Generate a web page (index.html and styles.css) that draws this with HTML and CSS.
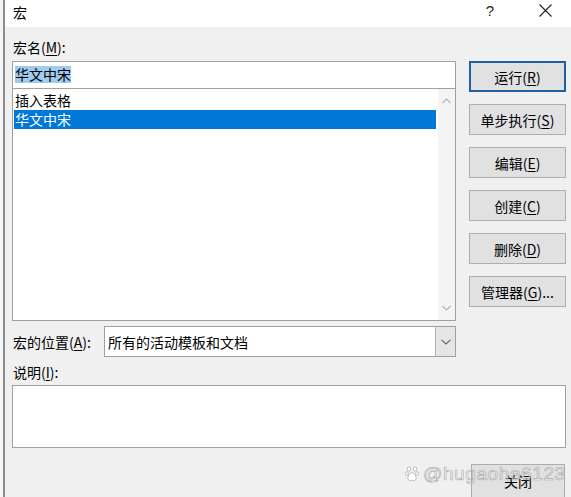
FILE: index.html
```html
<!DOCTYPE html>
<html lang="zh-CN">
<head>
<meta charset="utf-8">
<title>宏</title>
<link rel="stylesheet" href="styles.css">
</head>
<body>
<div class="window">
  <div class="titlebar">
    <span class="title">宏</span>
    <div class="controls">
      <span class="ctl help">?</span>
      <span class="ctl close">
        <svg width="13" height="13" viewBox="0 0 13 13"><path d="M0.5 0.5 L12.5 12.5 M12.5 0.5 L0.5 12.5" stroke="#222" stroke-width="1.1" fill="none"/></svg>
      </span>
    </div>
  </div>
  <div class="body">
    <div class="top">
      <div class="left">
        <div class="label">宏名(<u>M</u>):</div>
        <div class="name-input"><span class="sel">华文中宋</span></div>
        <div class="list">
          <div class="items">
            <div class="item">插入表格</div>
            <div class="item active">华文中宋</div>
          </div>
          <div class="scrollbar">
            <div class="arrow"><svg width="9" height="6" viewBox="0 0 9 6"><path d="M0.5 5 L4.5 1 L8.5 5" stroke="#b4b4b4" stroke-width="1.2" fill="none"/></svg></div>
            <div class="arrow"><svg width="9" height="6" viewBox="0 0 9 6"><path d="M0.5 1 L4.5 5 L8.5 1" stroke="#b4b4b4" stroke-width="1.2" fill="none"/></svg></div>
          </div>
        </div>
        <div class="loc">
          <div class="loc-label">宏的位置(<u>A</u>):</div>
          <div class="select">
            <span class="select-text">所有的活动模板和文档</span>
            <span class="dd"><svg width="10" height="6" viewBox="0 0 10 6"><path d="M0.5 0.8 L5 5 L9.5 0.8" stroke="#606060" stroke-width="1.1" fill="none"/></svg></span>
          </div>
        </div>
      </div>
      <div class="right">
        <div class="btn default">运行(<u>R</u>)</div>
        <div class="btn">单步执行(<u>S</u>)</div>
        <div class="btn">编辑(<u>E</u>)</div>
        <div class="btn">创建(<u>C</u>)</div>
        <div class="btn">删除(<u>D</u>)</div>
        <div class="btn">管理器(<u>G</u>)...</div>
      </div>
    </div>
    <div class="label desc-label">说明(<u>I</u>):</div>
    <div class="desc"></div>
    <div class="footer">
      <div class="btn close-btn">关闭</div>
    </div>
  </div>
  <div class="watermark">
    <svg class="paw" width="14" height="16" viewBox="0 0 14 16">
      <g fill="#fff" stroke="#b0b0b0" stroke-width="0.8">
        <ellipse cx="4" cy="3" rx="1.8" ry="2.2"/>
        <ellipse cx="10" cy="3" rx="1.8" ry="2.2"/>
        <ellipse cx="1.8" cy="7.5" rx="1.5" ry="1.9"/>
        <ellipse cx="12.2" cy="7.5" rx="1.5" ry="1.9"/>
        <path d="M7 6.5 C4.5 6.5 2.5 11 3 13 C3.5 15 6 14.5 7 14.2 C8 14.5 10.5 15 11 13 C11.5 11 9.5 6.5 7 6.5 Z"/>
      </g>
    </svg>
    <span class="wm-text">@hugaohe6123</span>
  </div>
</div>
</body>
</html>
```
FILE: styles.css
```css
html, body {
  margin: 0;
  padding: 0;
  background: #f4f4f4;
}
body {
  font-family: "Noto Sans CJK SC", "Microsoft YaHei", sans-serif;
  font-size: 14px;
  color: #000;
}
.window {
  position: relative;
  margin-left: 3px;
  border-left: 2px solid #8c8c8c;
  height: 497px;
  background: #f0f0f0;
  overflow: hidden;
}
.titlebar {
  height: 27px;
  background: #fff;
  display: flex;
  align-items: flex-start;
  padding-left: 8px;
  padding-right: 3px;
}
.title {
  margin-top: 3px;
  line-height: 18px;
  font-size: 14px;
}
.controls {
  margin-left: auto;
  display: flex;
}
.ctl {
  width: 46px;
  height: 21px;
  display: flex;
  align-items: center;
  justify-content: center;
}
.help {
  margin-right: 9px;
  font-family: "Liberation Sans", sans-serif;
  font-size: 15px;
  color: #222;
  line-height: 1;
}
.body {
  padding: 11px 5px 0 7px;
}
.top {
  display: grid;
  grid-template-columns: 444px 97px;
  column-gap: 13px;
}
.label {
  height: 18px;
  line-height: 18px;
  padding-left: 1px;
}
u {
  text-decoration-thickness: 1px;
  text-underline-offset: 2px;
}
.name-input {
  margin-top: 5px;
  height: 26px;
  border: 1px solid #a0a0a0;
  border-bottom: none;
  background: #fff;
  display: flex;
  align-items: center;
  padding-left: 2px;
}
.sel {
  background: #9fcbef;
  line-height: 17px;
  height: 17px;
  margin-top: -2px;
}
.list {
  height: 231px;
  border: 1px solid #a0a0a0;
  background: #fff;
  display: flex;
}
.items {
  flex: 1;
  padding: 2px 2px 0 1px;
}
.item {
  height: 19px;
  line-height: 19px;
  padding-left: 1px;
}
.item.active {
  background: #0078d7;
  color: #fff;
}
.scrollbar {
  width: 17px;
  background: #f4f4f4;
  display: flex;
  flex-direction: column;
  justify-content: space-between;
}
.arrow {
  height: 24px;
  display: flex;
  align-items: center;
  justify-content: center;
}
.loc {
  margin-top: 5px;
  display: flex;
  align-items: center;
}
.loc-label {
  width: 91px;
  padding-left: 1px;
  line-height: 18px;
}
.select {
  flex: 1;
  height: 29px;
  border: 1px solid #a0a0a0;
  background: #fff;
  display: flex;
  align-items: center;
}
.select-text {
  flex: 1;
  padding-left: 3px;
  line-height: 18px;
}
.dd {
  width: 19px;
  align-self: stretch;
  background: #e5e5e5;
  border-left: 1px solid #b4b4b4;
  display: flex;
  align-items: center;
  justify-content: center;
}
.right {
  padding-top: 23px;
  display: flex;
  flex-direction: column;
  gap: 12px;
}
.btn {
  box-sizing: border-box;
  height: 31px;
  border: 1px solid #adadad;
  background: #e1e1e1;
  display: flex;
  align-items: center;
  justify-content: center;
  line-height: 18px;
}
.btn.default {
  border: 2px solid #1f60a0;
}
.desc-label {
  margin-top: 6px;
}
.desc {
  margin-top: 4px;
  height: 61px;
  border: 1px solid #a0a0a0;
  background: #fff;
}
.footer {
  margin-top: 16px;
  display: flex;
  justify-content: flex-end;
  padding-right: 1px;
}
.close-btn {
  width: 94px;
  height: 36px;
  padding-bottom: 3px;
}
.watermark {
  position: absolute;
  left: 400px;
  top: 464px;
  display: flex;
  align-items: center;
  gap: 4px;
  pointer-events: none;
}
.wm-text {
  font-family: "Liberation Sans", sans-serif;
  font-size: 19px;
  letter-spacing: 0.6px;
  color: rgba(255, 255, 255, 0.55);
  -webkit-text-stroke: 0.7px rgba(150, 150, 150, 0.75);
  line-height: 20px;
}
```
